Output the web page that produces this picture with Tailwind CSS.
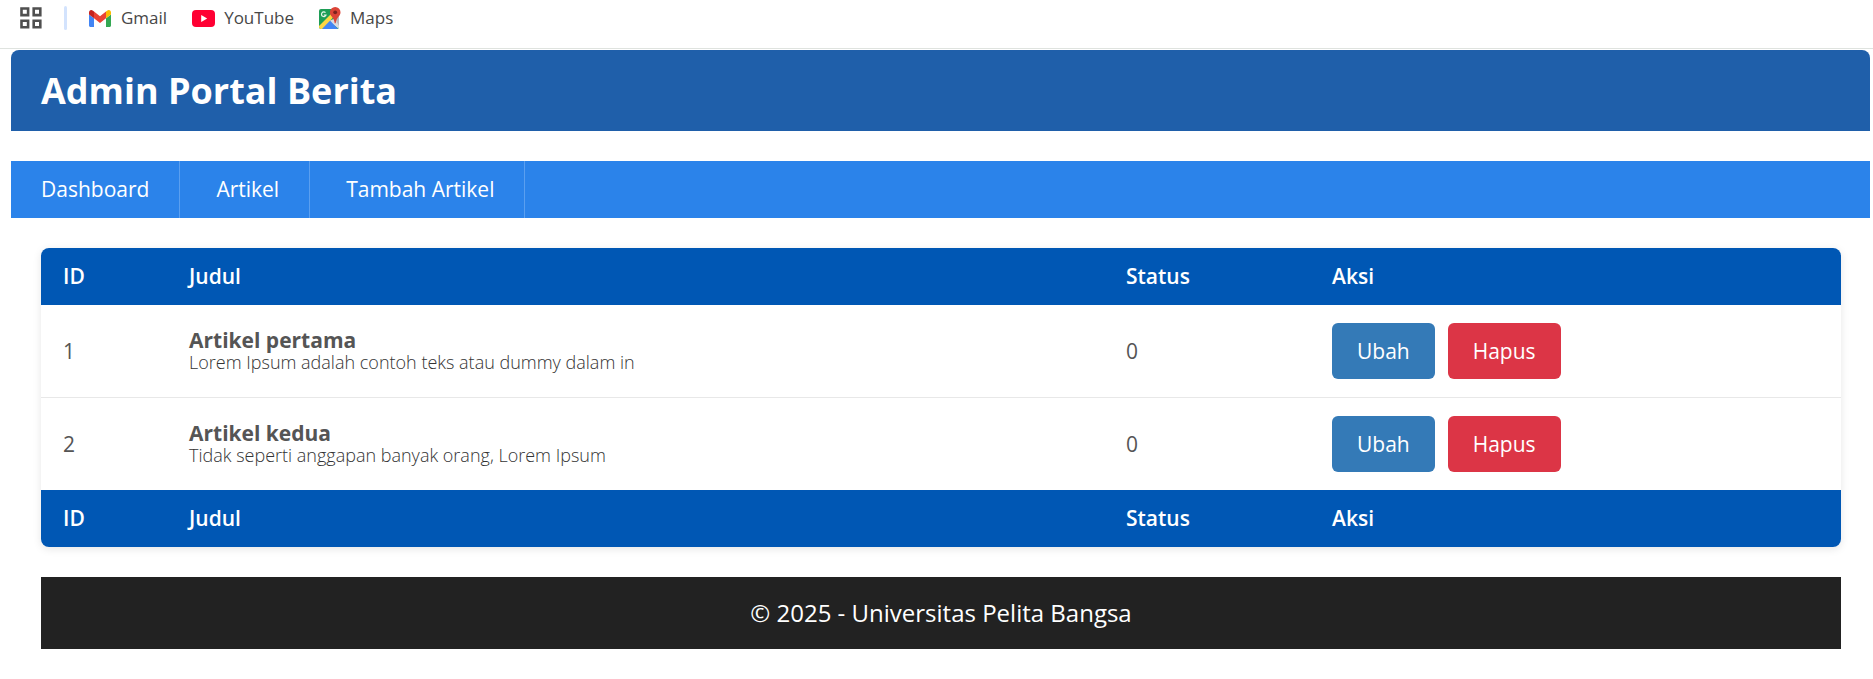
<!DOCTYPE html>
<html lang="id">
<head>
<meta charset="utf-8">
<title>Admin Portal Berita</title>
<script src="https://cdn.jsdelivr.net/npm/@tailwindcss/browser@4"></script>
</head>
<body class="bg-white font-['Open_Sans',sans-serif] text-[21px] leading-[25px] text-[#555]">
  <div class="flex h-[49px] items-start border-b border-[#dfe3df] pt-[6px] pl-5 text-[17px] leading-6 text-[#474747]">
    <div class="flex h-6 items-center">
      <button type="button" aria-label="Aplikasi" class="mr-[22px]">
        <svg class="block size-[22px]" viewBox="0 0 22 22" fill="none" stroke="#4f4f4f" stroke-width="2.6"><path d="M1.5 1.5h6.6v6.6H1.5zM13.7 1.5h6.6v6.6h-6.6zM1.5 13.7h6.6v6.6H1.5zM13.7 13.7h6.6v6.6h-6.6z"/></svg>
      </button>
      <span class="mr-[22px] h-6 w-[3px] rounded-full bg-[#d3e3fd]"></span>
      <a href="#" class="mr-[25px] flex items-center gap-[10px]">
        <svg class="block h-[17px] w-[22px]" viewBox="52 42 88 66" preserveAspectRatio="none"><path fill="#4285f4" d="M58 108h14V74L52 59v43c0 3.32 2.69 6 6 6"/><path fill="#34a853" d="M120 108h14c3.32 0 6-2.69 6-6V59l-20 15"/><path fill="#fbbc04" d="M120 48v26l20-15v-8c0-7.42-8.47-11.65-14.4-7.2"/><path fill="#ea4335" d="M72 74V48l24 18 24-18v26L96 92"/><path fill="#c5221f" d="M52 51v8l20 15V48l-5.6-4.2c-5.94-4.45-14.4-.22-14.4 7.2"/></svg>
        Gmail
      </a>
      <a href="#" class="mr-[25px] flex items-center gap-[9px]">
        <svg class="block h-[17px] w-[23px]" viewBox="0 0 23 17"><rect width="23" height="17" rx="4" fill="#ff0033"/><path d="M9.2 5v7l6-3.500z" fill="#fff"/></svg>
        YouTube
      </a>
      <a href="#" class="flex items-center gap-[9px]">
        <svg class="block size-[22px]" viewBox="0 0 22 22">
          <clipPath id="map"><rect y="2" width="20" height="20" rx="2"/></clipPath>
          <g clip-path="url(#map)"><path fill="#1e9e56" d="M0 2h20v20H0z"/><path fill="#d9dce0" d="M20 10 9.500 14 20 22z"/><path fill="#4285f4" d="M1 22 10 12.500 19 22z"/><path fill="#fdd643" d="m-1 20 14-14 2.500 3L2 23z"/><path fill="#b9bcc1" d="m16 12 4 7V8z"/></g>
          <path d="M6.500 5.700a2.300 2.300 0 1 0 .5 2.300H4.800" fill="none" stroke="#e8f5e9" stroke-width="1.200"/>
          <path fill="#db4437" d="M16.200 0a5.300 5.300 0 0 1 5.300 5.300c0 4.200-4.300 5-4.800 11h-1c-.5-6-4.800-6.800-4.800-11A5.300 5.300 0 0 1 16.200 0"/><circle cx="16.200" cy="5.300" r="1.900" fill="#7b231e"/>
        </svg>
        Maps
      </a>
    </div>
  </div>

  <div class="mt-px mr-[3px] ml-[11px]">
    <header class="rounded-t-lg bg-[#1f5faa] px-[30px] py-5">
      <h1 class="text-4xl leading-[41px] font-bold text-white">Admin Portal Berita</h1>
    </header>
    <nav class="mt-[30px] flex gap-[6px] bg-[#2b83ea] text-white">
      <a href="#" class="border-r border-[#5a9ff0] px-[30px] py-4">Dashboard</a>
      <a href="#" class="border-r border-[#5a9ff0] px-[30px] py-4">Artikel</a>
      <a href="#" class="border-r border-[#5a9ff0] px-[30px] py-4">Tambah Artikel</a>
    </nav>

    <main class="my-[30px] mr-[29px] ml-[30px] overflow-hidden rounded-lg shadow-[0_2px_8px_rgba(0,0,0,0.1)]">
      <table class="w-full table-fixed border-collapse text-left">
        <thead class="bg-[#0057b4] text-white">
          <tr>
            <th class="w-[126px] px-[22px] py-4 font-semibold">ID</th>
            <th class="px-[22px] py-4 font-semibold">Judul</th>
            <th class="w-[206px] px-[22px] py-4 font-semibold">Status</th>
            <th class="w-[531px] px-[22px] py-4 font-semibold">Aksi</th>
          </tr>
        </thead>
        <tbody>
          <tr class="border-b border-[#e8e8e8]">
            <td class="px-[22px] py-[18px]">1</td>
            <td class="px-[22px] py-[18px]"><b class="block leading-[22px]">Artikel pertama</b><p class="text-[18px] leading-[22px] font-light text-[#333]">Lorem Ipsum adalah contoh teks atau dummy dalam in</p></td>
            <td class="px-[22px] py-[18px]">0</td>
            <td class="px-[22px] py-[18px]"><div class="flex gap-[13px] text-white"><a href="#" class="rounded-md bg-[#347ab7] px-[25px] py-[15px] leading-[26px]">Ubah</a><a href="#" class="rounded-md bg-[#dc3546] px-[25px] py-[15px] leading-[26px]">Hapus</a></div></td>
          </tr>
          <tr>
            <td class="px-[22px] py-[18px]">2</td>
            <td class="px-[22px] py-[18px]"><b class="block leading-[22px]">Artikel kedua</b><p class="text-[18px] leading-[22px] font-light text-[#333]">Tidak seperti anggapan banyak orang, Lorem Ipsum</p></td>
            <td class="px-[22px] py-[18px]">0</td>
            <td class="px-[22px] py-[18px]"><div class="flex gap-[13px] text-white"><a href="#" class="rounded-md bg-[#347ab7] px-[25px] py-[15px] leading-[26px]">Ubah</a><a href="#" class="rounded-md bg-[#dc3546] px-[25px] py-[15px] leading-[26px]">Hapus</a></div></td>
          </tr>
        </tbody>
        <tfoot class="bg-[#0057b4] text-white">
          <tr>
            <th class="px-[22px] py-4 font-semibold">ID</th>
            <th class="px-[22px] py-4 font-semibold">Judul</th>
            <th class="px-[22px] py-4 font-semibold">Status</th>
            <th class="px-[22px] py-4 font-semibold">Aksi</th>
          </tr>
        </tfoot>
      </table>
    </main>

    <footer class="mr-[29px] ml-[30px] bg-[#222] py-5 text-center text-2xl leading-8 text-white">© 2025 - Universitas Pelita Bangsa</footer>
  </div>
</body>
</html>
